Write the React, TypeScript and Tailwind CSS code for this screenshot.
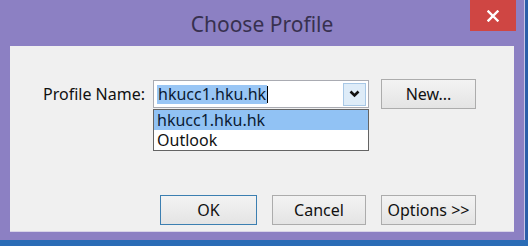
import React from "react"

const font = {fontFamily: '"Noto Sans", "Open Sans", sans-serif'}

interface BtnProps {
  label: string
  isDefault?: boolean
  width: string
}

const DialogButton: React.FC<BtnProps> = ({label, isDefault, width}) => (
  <button
    className={
      isDefault
        ? `${width} h-[30px] border border-[#3c7fb1] bg-gradient-to-b from-[#f3f3f3] to-[#e4e4e4] text-[16px] text-[#111] leading-none`
        : `${width} h-[30px] border border-[#acacac] bg-gradient-to-b from-[#f3f3f3] to-[#e4e4e4] text-[16px] text-[#111] leading-none`
    }
  >
    {label}
  </button>
)

const App: React.FC = () => {
  return (
    <div className="flex flex-col w-[528px] h-[246px] bg-[#8c80c3] overflow-hidden" style={font}>
      <div className="flex flex-row flex-1">
        <div className="flex flex-col w-[524px]">
          {/* title bar */}
          <div className="relative flex h-[46px] items-center justify-center">
            <span className="text-[21px] text-[#37304f] pt-[4px]">Choose Profile</span>
            <div className="absolute top-0 right-[8px] flex w-[46px] h-[31px] items-center justify-center bg-[#cf4643]">
              <svg width="12" height="12" viewBox="0 0 12 12">
                <path d="M1.5 1.5 L10.5 10.5 M10.5 1.5 L1.5 10.5" stroke="#fff" strokeWidth="2.4" strokeLinecap="square" />
              </svg>
            </div>
          </div>
          {/* client area */}
          <div className="flex flex-col ml-[10px] w-[504px] h-[186px] bg-[#f0f0f0] border-b border-[#d8d4e8] pt-[33px] pb-[6px]">
            <div className="flex flex-row items-start">
              <div className="w-[143px] pl-[33px] pt-[3px] text-[16px] text-[#111]">Profile Name:</div>
              <div className="flex flex-col w-[216px]">
                <div className="flex flex-row items-center h-[28px] mt-[1px] bg-white border border-[#a9abb2] pl-[3px] pr-[2px]">
                  <div className="flex items-center h-[19px]">
                    <span className="bg-[#99c6f5] text-[16px] leading-[19px] text-[#0b1a33] px-[1px]">hkucc1.hku.hk</span>
                    <span className="w-px h-[17px] bg-black" />
                  </div>
                  <div className="flex-1" />
                  <div className="flex items-center justify-center w-[23px] h-[23px] bg-[#deecf8] border border-[#a8c8e6]">
                    <svg width="11" height="8" viewBox="0 0 11 8">
                      <path d="M1.5 1.5 L5.5 5.5 L9.5 1.5" stroke="#111" strokeWidth="2.6" fill="none" />
                    </svg>
                  </div>
                </div>
                <div className="flex flex-col mt-[1px] border border-[#646464] bg-white text-[16px] leading-[20px] text-[#111]">
                  <div className="bg-[#91c2f4] pl-[3px] h-[20px] text-[#0b1a33]">hkucc1.hku.hk</div>
                  <div className="pl-[3px] h-[20px]">Outlook</div>
                </div>
              </div>
              <div className="ml-[12px]">
                <DialogButton label="New..." width="w-[95px]" />
              </div>
            </div>
            <div className="flex-1" />
            <div className="flex flex-row pl-[150px] gap-[15px]">
              <DialogButton label="OK" isDefault width="w-[97px]" />
              <DialogButton label="Cancel" width="w-[94px]" />
              <DialogButton label="Options >>" width="w-[95px]" />
            </div>
          </div>
        </div>
        <div className="flex flex-row w-[4px]">
          <div className="w-px bg-[#c9c4e6]" />
          <div className="flex-1 bg-[#2b5ea8]" />
        </div>
      </div>
      <div className="h-[6px] bg-[#2a6cb6]" />
    </div>
  )
}

export default App
